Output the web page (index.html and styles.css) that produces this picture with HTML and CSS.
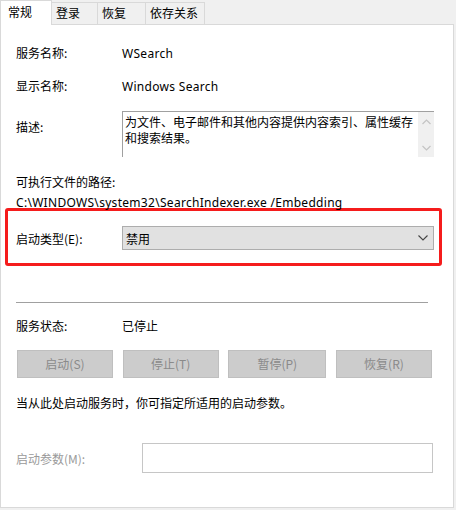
FILE: index.html
```html
<!DOCTYPE html>
<html lang="zh-CN">
<head>
<meta charset="utf-8">
<link rel="stylesheet" href="styles.css">
</head>
<body>
<div class="tabs">
  <div class="tab active">常规</div>
  <div class="tab t2">登录</div>
  <div class="tab t3">恢复</div>
  <div class="tab t4">依存关系</div>
</div>
<div class="panel">
  <div class="row r1"><span class="label">服务名称:</span><span class="latin">WSearch</span></div>
  <div class="row r2"><span class="label">显示名称:</span><span class="latin">Windows Search</span></div>
  <div class="desc-row">
    <span class="label desc-label">描述:</span>
    <div class="textarea">
      <div class="ta-text">为文件、电子邮件和其他内容提供内容索引、属性缓存和搜索结果。</div>
      <div class="scrollbar">
        <svg width="9" height="6" viewBox="0 0 9 6"><path d="M0.5 5 L4.5 1 L8.5 5" fill="none" stroke="#c4c4c4" stroke-width="1.2"/></svg>
        <svg width="9" height="6" viewBox="0 0 9 6"><path d="M0.5 1 L4.5 5 L8.5 1" fill="none" stroke="#c4c4c4" stroke-width="1.2"/></svg>
      </div>
    </div>
  </div>
  <div class="row r4">可执行文件的路径:</div>
  <div class="row path"><span class="latin">C:\WINDOWS\system32\SearchIndexer.exe /Embedding</span></div>
  <div class="redbox">
    <div class="startup-row">
      <span class="label">启动类型(E):</span>
      <div class="select">
        <span>禁用</span>
        <svg width="10" height="6" viewBox="0 0 10 6"><path d="M0.5 0.5 L5 5 L9.5 0.5" fill="none" stroke="#444" stroke-width="1.1"/></svg>
      </div>
    </div>
  </div>
  <div class="separator"></div>
  <div class="row status"><span class="label">服务状态:</span><span class="value">已停止</span></div>
  <div class="buttons">
    <div class="btn">启动(S)</div>
    <div class="btn">停止(T)</div>
    <div class="btn wide">暂停(P)</div>
    <div class="btn">恢复(R)</div>
  </div>
  <div class="row hint">当从此处启动服务时，你可指定所适用的启动参数。</div>
  <div class="param-row">
    <span class="param-label">启动参数(M):</span>
    <div class="input"></div>
  </div>
</div>
</body>
</html>
```
FILE: styles.css
```css
* { box-sizing: border-box; }
html, body {
  margin: 0;
  padding: 0;
  width: 456px;
  height: 510px;
  background: #f0f0f0;
  overflow: hidden;
}
body {
  font-family: "Noto Sans CJK SC", "Noto Sans", sans-serif;
  font-size: 12px;
  color: #000;
}
.latin {
  font-family: "Noto Sans", "Noto Sans CJK SC", sans-serif;
  letter-spacing: 0.3px;
  padding-top: 2px;
}
.tabs {
  display: flex;
  align-items: flex-end;
  height: 24px;
}
.tab {
  height: 22px;
  border-top: 1px solid #d9d9d9;
  border-right: 1px solid #d9d9d9;
  background: #f0f0f0;
  line-height: 20px;
  padding-left: 4px;
}
.tab.active {
  position: relative;
  z-index: 2;
  height: 25px;
  margin-bottom: -1px;
  width: 52px;
  background: #fff;
  border-left: 1px solid #d9d9d9;
  padding-left: 7px;
  line-height: 22px;
}
.t2 { width: 46px; }
.t3 { width: 48px; }
.t4 { width: 59px; }
.panel {
  width: 454px;
  height: 484px;
  background: #fff;
  border: 1px solid #d9d9d9;
  padding-top: 20px;
}
.row {
  display: flex;
  align-items: center;
  height: 16px;
  line-height: 16px;
  padding-left: 15px;
  white-space: nowrap;
}
.label { width: 106px; flex: none; }
.r2 { margin-top: 17px; }
.desc-row {
  display: flex;
  margin-top: 17px;
  padding-left: 15px;
}
.desc-label { margin-top: 8px; line-height: 16px; height: 16px; }
.textarea {
  width: 312px;
  height: 46px;
  border-top: 1px solid #a0a0a0;
  border-left: 1px solid #a0a0a0;
  display: flex;
}
.ta-text {
  flex: 1;
  padding: 2px 0 0 2px;
  line-height: 16px;
}
.scrollbar {
  width: 16px;
  background: #f0f0f0;
  display: flex;
  flex-direction: column;
  justify-content: space-between;
  align-items: center;
  padding: 7px 0 6px;
}
.scrollbar svg { display: block; }
.r4 { margin-top: 17px; }
.path { margin-top: 4px; }
.redbox {
  margin: -2px 0 0 4px;
  width: 437px;
  height: 58px;
  border: 3px solid #f51c1c;
  border-radius: 3px;
  padding: 15px 0 0 8px;
}
.startup-row {
  display: flex;
  align-items: center;
  height: 24px;
}
.select {
  width: 312px;
  height: 24px;
  background: #e1e1e1;
  border: 1px solid #adadad;
  display: flex;
  align-items: center;
  justify-content: space-between;
  padding: 0 5px 0 3px;
}
.select svg { display: block; }
.separator {
  margin: 36px 0 0 15px;
  width: 412px;
  height: 1px;
  background: #a0a0a0;
}
.status { margin-top: 15px; }
.buttons {
  display: flex;
  justify-content: space-between;
  margin: 16px 0 0 16px;
  width: 415px;
}
.btn {
  width: 96px;
  height: 28px;
  background: #cccccc;
  border: 1px solid #bfbfbf;
  color: #8a8a8a;
  text-align: center;
  line-height: 26px;
}
.btn.wide { width: 98px; }
.hint { margin-top: 17px; }
.param-row {
  display: flex;
  align-items: center;
  margin-top: 32px;
  padding-left: 15px;
}
.param-label { width: 126px; color: #9a9a9a; }
.input {
  width: 291px;
  height: 30px;
  border: 1px solid #c6c6c6;
  background: #fff;
}
```
